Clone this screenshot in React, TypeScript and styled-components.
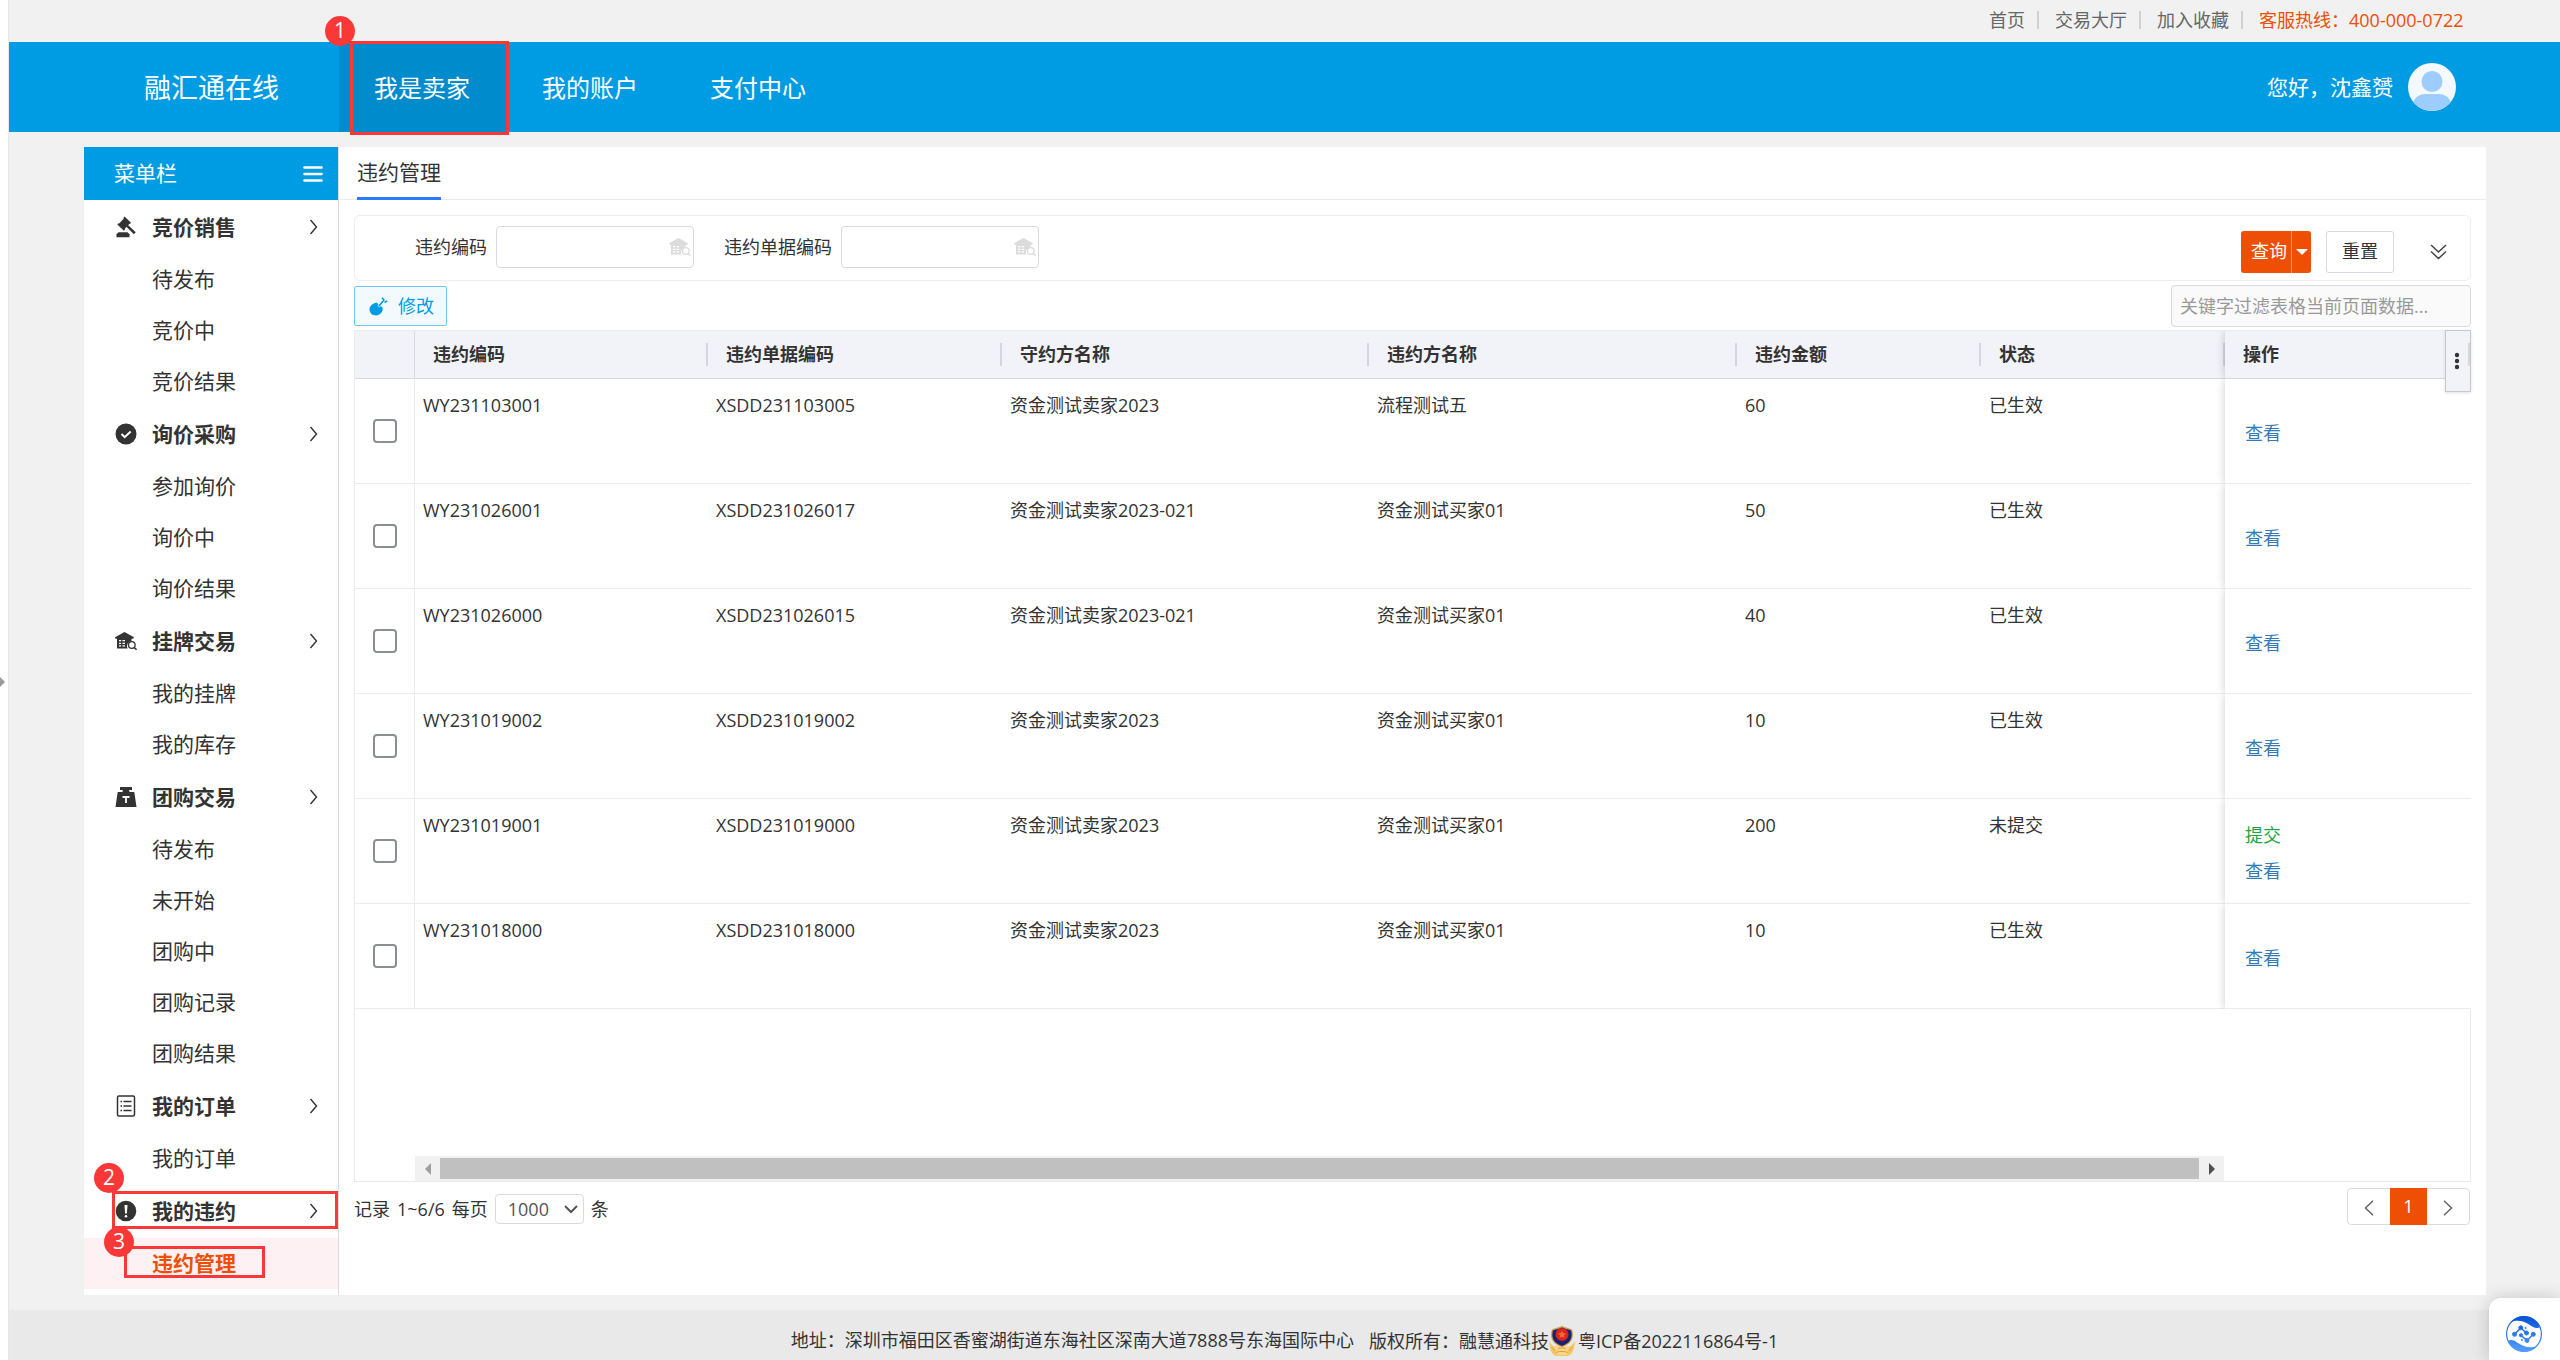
import React from 'react';
import styled, { createGlobalStyle, css } from 'styled-components';

const GlobalStyle = createGlobalStyle`
  *, *::before, *::after { box-sizing: border-box; }
  body {
    margin: 0;
    background: #fff;
    color: #333;
    font-family: "Open Sans", "Noto Sans CJK SC", sans-serif;
    font-size: 18px;
    line-height: 27px;
  }
  a { color: inherit; text-decoration: none; }
  button, input, select { font: inherit; color: inherit; margin: 0; }
  button { padding: 0; border: 0; background: none; cursor: pointer; }
  svg { display: block; flex: none; }
`;

/* ---------- shell ---------- */

const Shell = styled.div`
  display: flex;
  min-height: 100vh;
`;

const CollapseStrip = styled.button`
  display: flex;
  align-items: center;
  width: 9px;
  height: 100vh;
  flex: none;
  position: sticky;
  top: 0;
  padding-top: 4px;
  border-right: 1px solid #e6e6e6;
  background: #fff;
`;

const Page = styled.div`
  display: flex;
  flex-direction: column;
  flex: 1;
  min-width: 0;
  background: #f1f1f1;
`;

const TopBar = styled.nav`
  display: flex;
  justify-content: flex-end;
  align-items: center;
  height: 42px;
  padding: 0 89px 3px 0;
  color: #666;
`;

const TopLink = styled.a`
  line-height: 18px;
  &:not(:last-child) {
    margin-right: 16px;
    padding-right: 12px;
    border-right: 2px solid #d3d0d0;
  }
`;

const Hotline = styled(TopLink)`
  min-width: 212px;
  color: #ee4f04;
`;

const Header = styled.header`
  display: flex;
  align-items: center;
  height: 90px;
  padding: 0 104px 0 135px;
  background: #009ce3;
  color: #fff;
`;

const Brand = styled.a`
  width: 195px;
  font-size: 27px;
`;

const MainNav = styled.nav`
  display: flex;
  align-self: stretch;
  flex: 1;
  font-size: 24px;
`;

const NavItem = styled.a<{ $active?: boolean }>`
  display: flex;
  align-items: center;
  position: relative;
  padding: 0 37px 0 35px;
  background: ${p => (p.$active ? '#008ccc' : 'transparent')};
`;

const User = styled.div`
  display: flex;
  align-items: center;
  gap: 15px;
  font-size: 21px;
`;

/* ---------- guide marks laid over the page ---------- */

const Frame = styled.span<{ $inset: string }>`
  position: absolute;
  inset: ${p => p.$inset};
  border: 3px solid #fb3838;
  pointer-events: none;
`;

const StepDot = styled.span<{ $left: number; $top: number }>`
  position: absolute;
  left: ${p => p.$left}px;
  top: ${p => p.$top}px;
  z-index: 2;
  width: 30px;
  height: 30px;
  border-radius: 50%;
  background: #fb3838;
  color: #fff;
  font-size: 21px;
  font-weight: 400;
  line-height: 28px;
  text-align: center;
`;

/* ---------- side menu ---------- */

const Body = styled.div`
  display: flex;
  margin: 15px 74px 15px 75px;
  background: #fff;
`;

const Sidebar = styled.aside`
  width: 255px;
  flex: none;
  padding-bottom: 6px;
  border-right: 1px solid #dcdcde;
  font-size: 21px;
`;

const SidebarHead = styled.div`
  display: flex;
  justify-content: space-between;
  align-items: center;
  height: 53px;
  padding: 0 15px 0 30px;
  background: #009ce3;
  color: #fff;
`;

const IconButton = styled.button`
  display: flex;
  align-items: center;
  justify-content: center;
`;

const GroupTitle = styled.button`
  display: flex;
  align-items: center;
  gap: 15px;
  position: relative;
  width: 100%;
  height: 54px;
  padding: 0 20px 0 31px;
  font-weight: 700;
  text-align: left;
  > svg:nth-of-type(2) { margin-left: auto; }
`;

const MenuLink = styled.a<{ $active?: boolean }>`
  display: block;
  position: relative;
  height: 51px;
  padding-left: 68px;
  line-height: 51px;
  ${p => p.$active && css`
    background: #fdf1f3;
    color: #ee4f04;
    font-weight: 700;
  `}
`;

/* ---------- work area ---------- */

const Main = styled.main`
  display: flex;
  flex-direction: column;
  flex: 1;
  min-width: 0;
`;

const Tabs = styled.div`
  display: flex;
  height: 53px;
  padding: 0 18px;
  border-bottom: 1px solid #ebebeb;
`;

const Tab = styled.button`
  height: 53px;
  border-bottom: 3px solid #2b7bff;
  font-size: 21px;
`;

const Work = styled.div`
  display: flex;
  flex-direction: column;
  flex: 1;
  padding: 15px 15px 0;
`;

const SearchPanel = styled.form`
  display: flex;
  align-items: center;
  height: 66px;
  padding: 0 23px 0 60px;
  border: 1px solid #eee;
  border-radius: 6px;
`;

const Field = styled.label`
  display: flex;
  align-items: center;
  gap: 9px;
  margin: 0 30px 2px 0;
`;

const LookupBox = styled.span`
  display: flex;
  align-items: center;
  width: 198px;
  height: 42px;
  padding-right: 2px;
  border: 1px solid #d7dae3;
  border-radius: 4px;
  color: #dcdcdc;
  input {
    flex: 1;
    min-width: 0;
    height: 100%;
    padding: 0 9px;
    border: 0;
    outline: 0;
    background: none;
    color: #333;
  }
`;

const Actions = styled.div`
  display: flex;
  align-items: center;
  height: 42px;
  margin: 7px 0 0 auto;
`;

const SplitButton = styled.div`
  display: flex;
  height: 42px;
  margin-right: 15px;
  border-radius: 3px;
  overflow: hidden;
  background: #ee4f04;
  color: #fff;
`;

const QueryButton = styled.button`
  width: 50px;
  padding-left: 6px;
`;

const CaretButton = styled(IconButton)`
  width: 20px;
  border-left: 1px solid #f69a72;
`;

const ResetButton = styled.button`
  width: 68px;
  height: 42px;
  margin-right: 36px;
  border: 1px solid #d7dae3;
  border-radius: 3px;
`;

const Toolbar = styled.div`
  display: flex;
  justify-content: space-between;
  align-items: center;
  padding: 4px 0 3px;
`;

const EditButton = styled.button`
  display: flex;
  align-items: center;
  gap: 10px;
  height: 40px;
  padding: 0 12px 0 14px;
  border: 1px solid #72c6ee;
  border-radius: 2px;
  background: #f2fafe;
  color: #009ce3;
`;

const FilterInput = styled.input`
  width: 300px;
  height: 42px;
  padding: 0 8px;
  border: 1px solid #d7dae3;
  border-radius: 4px;
  background: #fafafa;
  &::placeholder { color: #999; opacity: 1; }
`;

const TableFrame = styled.div`
  display: flex;
  flex-direction: column;
  flex: 1;
  position: relative;
  border: 1px solid #ebebed;
`;

const Grid = styled.table`
  width: 100%;
  border-collapse: separate;
  border-spacing: 0;
  table-layout: fixed;
  overflow: hidden;
`;

const HeadCell = styled.th`
  height: 48px;
  padding: 0 18px;
  border-bottom: 1px solid #d6d9e0;
  background: linear-gradient(#d4d7de, #d4d7de) right center / 2px 23px no-repeat #f2f3f9;
  text-align: left;
  font-weight: 700;
`;

const HeadCheckCell = styled(HeadCell)`
  border-right: 1px solid #d6d9e0;
  background: #f2f3f9;
`;

const pinned = css`
  position: sticky;
  right: 0;
  box-shadow: 0 0 9px rgba(0, 0, 0, 0.2);
  clip-path: inset(0 0 0 -9px);
`;

const PinnedHead = styled(HeadCell)`
  ${pinned}
`;

const Cell = styled.td`
  height: 105px;
  padding: 13px 8px;
  border-bottom: 1px solid #ebebf0;
  vertical-align: top;
`;

const CheckCell = styled(Cell)`
  padding: 0;
  border-right: 1px solid #ebebed;
  vertical-align: middle;
`;

const PinnedCell = styled(Cell)`
  ${pinned}
  padding: 4px 20px 0;
  background: #fff;
  vertical-align: middle;
`;

const RowCheck = styled.input`
  display: block;
  appearance: none;
  width: 24px;
  height: 24px;
  margin: 0 auto;
  border: 2px solid #8a8f91;
  border-radius: 4px;
  background: #fff;
  &:checked { background: #009ce3; }
`;

const RowAction = styled.a<{ $green?: boolean }>`
  display: block;
  line-height: 36px;
  color: ${p => (p.$green ? '#22a544' : '#337ab7')};
`;

const ColumnMenu = styled(IconButton)`
  position: absolute;
  top: -1px;
  right: -1px;
  width: 26px;
  height: 62px;
  padding-right: 2px;
  border: 1px solid #c6c8cc;
  background: linear-gradient(#d4d7de, #d4d7de) right 12px / 2px 23px no-repeat #f2f3f9;
  box-shadow: 0 1px 3px rgba(0, 0, 0, 0.12);
`;

const ScrollTrack = styled.div`
  display: flex;
  align-items: center;
  height: 25px;
  margin: auto 246px 0 60px;
  background: #f1f1f1;
`;

const ScrollThumb = styled.div`
  flex: 1;
  height: 21px;
  background: #c0c0c0;
`;

const ScrollArrow = styled(IconButton)`
  width: 25px;
  height: 25px;
`;

const Pager = styled.div`
  display: flex;
  justify-content: space-between;
  align-items: flex-start;
  height: 113px;
  padding: 6px 1px 0 0;
`;

const PageSize = styled.div`
  display: flex;
  align-items: center;
  gap: 7px;
  padding-top: 6px;
`;

const SelectBox = styled.span`
  display: flex;
  align-items: center;
  position: relative;
  color: #555;
  select {
    width: 89px;
    height: 30px;
    padding: 0 12px;
    border: 1px solid #d7dae3;
    border-radius: 4px;
    background: #fff;
    appearance: none;
  }
  svg {
    position: absolute;
    right: 6px;
    pointer-events: none;
  }
`;

const Pages = styled.nav`
  display: flex;
  height: 37px;
  border: 1px solid #dcdcdc;
  border-radius: 4px;
`;

const PageStep = styled(IconButton)`
  width: 42px;
  padding-top: 2px;
  color: #666;
`;

const PageNumber = styled.button`
  width: 37px;
  margin: -1px 0;
  background: #ee4f04;
  color: #fff;
`;

/* ---------- footer ---------- */

const Footer = styled.footer`
  display: flex;
  justify-content: center;
  flex: 1;
  min-height: 50px;
  gap: 15px;
  padding-top: 15px;
  background: #e9e9e9;
  line-height: 30px;
`;

const Copyright = styled.span`
  display: flex;
  align-items: center;
  height: 32px;
  a { padding-left: 3px; }
`;

const ChatWidget = styled.button`
  display: flex;
  position: fixed;
  right: 0;
  bottom: 0;
  width: 71px;
  height: 62px;
  padding: 18px 0 0 17px;
  border-radius: 12px 0 0 0;
  background: #fff;
  box-shadow: 0 0 18px rgba(0, 0, 0, 0.18);
`;

/* ---------- icons ---------- */

const GavelIcon = () => (
  <svg width="22" height="22" viewBox="0 0 22 22" fill="currentColor">
    <path d="M9.500 .5l6.500 6.300-1 1.200-.6-.3-4.600 5 .3.7-1.200 1.300L2.300 8.500l1.200-1.300.7.3 4.600-5-.3-.7z" />
    <path d="M12.500 8.500l8.200 7.700-1.800 2.100-7.800-7.900z" />
    <path d="M3.500 16.300h9l2 1.900v3h-13v-3z" />
  </svg>
);

const CheckDiscIcon = () => (
  <svg width="22" height="22" viewBox="0 0 22 22">
    <circle cx="11" cy="11" r="10.500" fill="currentColor" />
    <path d="M6.500 11l3.200 3.200 6-5.700" fill="none" stroke="#fff" strokeWidth="2" />
  </svg>
);

const HouseSearchIcon = ({ size = 22 }: { size?: number }) => (
  <svg width={size} height={size} viewBox="0 0 22 22">
    <path d="M9.500 2L19 7.200l-.8 1.600h-1.700v2.400a5 5 0 00-4 7.300H2V8.800H.5L0 7.200z" fill="currentColor" />
    <path d="M4 10.700h2.200M7.500 10.700H10M4 13.300h2.200M7.500 13.300H10M4 15.900h2.200M7.500 15.900H10" stroke="#fff" strokeWidth="1.200" />
    <circle cx="16.800" cy="15" r="3.300" fill="none" stroke="currentColor" strokeWidth="1.300" />
    <path d="M19.200 17.500l2.400 2.200" stroke="currentColor" strokeWidth="1.600" />
  </svg>
);

const WeightIcon = () => (
  <svg width="22" height="22" viewBox="0 0 22 22">
    <path d="M5 1h12v3h-3l.6 2h4.700L21.500 21H.5L2.700 6h4.700L8 4H5z" fill="currentColor" />
    <path d="M7.500 11h7M11 11V17" stroke="#fff" strokeWidth="1.800" />
  </svg>
);

const ListIcon = () => (
  <svg width="22" height="22" viewBox="0 0 22 22" fill="none" stroke="currentColor">
    <rect x="2.500" y="1" width="17" height="20" rx="1.500" strokeWidth="1.500" />
    <path d="M5.500 6.500H7M8.500 6.500h8M5.500 11H7M8.500 11h8M5.500 15.500H7M8.500 15.500h8" strokeWidth="1.400" />
  </svg>
);

const AlertDiscIcon = () => (
  <svg width="22" height="22" viewBox="0 0 22 22">
    <circle cx="11" cy="11" r="10.300" fill="currentColor" />
    <path d="M9.500 5h3l-.6 8.500h-1.800z" fill="#fff" />
    <circle cx="11" cy="16.300" r="1.300" fill="#fff" />
  </svg>
);

const ChevronIcon = () => (
  <svg width="9" height="16" viewBox="0 0 9 16" fill="none" stroke="currentColor" strokeWidth="1.400">
    <path d="M1.500 1l6 7-6 7" />
  </svg>
);

const HamburgerIcon = () => (
  <svg width="20" height="16" viewBox="0 0 20 16" stroke="currentColor" strokeWidth="2.600" strokeLinecap="round">
    <path d="M1.500 1.500h17M1.500 8h17M1.500 14.500h17" />
  </svg>
);

const AvatarIcon = () => (
  <svg width="48" height="48" viewBox="0 0 48 48">
    <circle cx="24" cy="24" r="24" fill="#f3f9ff" />
    <circle cx="24" cy="18.500" r="10.500" fill="#9dcdff" />
    <path d="M5.500 39.200C7 34 12 31 17 31h14c5 0 10 3 11.500 8.200A24 24 0 015.500 39.200z" fill="#9dcdff" />
  </svg>
);

const EditIcon = () => (
  <svg width="19" height="19" viewBox="0 0 19 19">
    <path d="M7.500 5.500l6 5c1 4-2.500 8-6.500 8C3 18.500.5 15.500.5 12.500.5 9 3.500 6.500 7.500 5.500z" fill="currentColor" />
    <path d="M9.500 9.500l5-6" stroke="#f2fafe" strokeWidth="2.800" />
    <path d="M9.800 9.300l5.200-6.200M13 .8l2.200 2.400M15.500 5.500l2.700-1.600" stroke="currentColor" strokeWidth="1.600" fill="none" />
  </svg>
);

const Caret = ({ dir, color, size = 6 }: { dir: 'left' | 'right' | 'down'; color: string; size?: number }) => {
  const long = size * 2;
  const box = dir === 'down' ? [long, size] : [size, long];
  const d = {
    left: `M${size} 0v${long}L0 ${size}z`,
    right: `M0 0v${long}l${size}-${size}z`,
    down: `M0 0h${long}l-${size} ${size}z`,
  }[dir];
  return (
    <svg width={box[0]} height={box[1]} viewBox={`0 0 ${box[0]} ${box[1]}`} fill={color}>
      <path d={d} />
    </svg>
  );
};

const DoubleDownIcon = () => (
  <svg width="17" height="16" viewBox="0 0 17 16" fill="none" stroke="#444" strokeWidth="1.500">
    <path d="M1 1l7.500 7L16 1M1 7.500l7.500 7 7.500-7" />
  </svg>
);

const DotsIcon = () => (
  <svg width="6" height="18" viewBox="0 0 6 18" fill="#333">
    <circle cx="3" cy="3" r="2.200" /><circle cx="3" cy="9" r="2.200" /><circle cx="3" cy="15" r="2.200" />
  </svg>
);

const SelectArrow = () => (
  <svg width="14" height="9" viewBox="0 0 14 9" fill="none" stroke="currentColor" strokeWidth="2">
    <path d="M1 1l6 6 6-6" />
  </svg>
);

const StepIcon = ({ back }: { back?: boolean }) => (
  <svg width="10" height="16" viewBox="0 0 10 16" fill="none" stroke="currentColor" strokeWidth="1.500">
    <path d={back ? 'M9 .8L1.500 8 9 15.200' : 'M1 .8L8.500 8 1 15.200'} />
  </svg>
);

const PoliceBadgeIcon = () => (
  <svg width="26" height="30" viewBox="0 0 26 30">
    <path d="M.5 15C0 24 4 30 8 30h10c4 0 8-6 7.500-15-2 5-6 7.500-12.500 7.500S2.500 20 .5 15z" fill="#f4c765" />
    <path d="M5 20l3 9h10l3-9z" fill="#f8d588" />
    <path d="M13 0c3 2 7 1.500 10 3.500 2 6 1.500 14-10 17.500C1.500 17.500 1 9.500 3 3.500 6 1.500 10 2 13 0z" fill="#c89a4a" />
    <path d="M13 1.500c3 2 6.500 1.500 9 3 1.700 6 .5 12-9 15.500C3.500 16.500 2.300 10.500 4 4.500c2.500-1.500 6-1 9-3z" fill="#1b2370" />
    <circle cx="13" cy="8.500" r="6.500" fill="#d8261c" />
    <path d="M13 4.500l1.200 2.600 2.800.3-2 1.900.5 2.800-2.500-1.400-2.500 1.400.5-2.800-2-1.900 2.800-.3z" fill="#f5672c" />
    <path d="M9 23c2-1.500 6-1.500 8 0M7 26.500c3-1.500 9-1.500 12 0M2.500 21l4 4M23.500 21l-4 4" stroke="#dca040" fill="none" />
  </svg>
);

const ChatLogo = () => (
  <svg width="36" height="36" viewBox="0 0 36 36">
    <defs>
      <linearGradient id="chat-blue" x1="0" y1="0" x2="0" y2="36" gradientUnits="userSpaceOnUse">
        <stop offset="0" stopColor="#0553d8" />
        <stop offset="1" stopColor="#559dff" />
      </linearGradient>
    </defs>
    <g fill="url(#chat-blue)" stroke="url(#chat-blue)">
      <circle cx="18" cy="18" r="17.400" fill="none" strokeWidth="1.200" />
      <path stroke="none" d="M4.500 6A18 18 0 0134 10.500c-1 2-4.500 2-7 .5C21 7 15 2.500 4.500 6z" />
      <path stroke="none" d="M31.500 30A18 18 0 012 25.500c1-2 4.500-2 7-.5 6 4 12 8.500 22.500 5z" />
      <path d="M8.500 18.300l6.300-6.300M14.800 12l5.700 5M15 19.300l6 5.200 6.300-6.200" fill="none" strokeWidth="1.600" />
      <circle cx="8.500" cy="18.300" r="2" /><circle cx="14.800" cy="11.800" r="2" />
      <circle cx="20.500" cy="17" r="2" /><circle cx="15" cy="19.300" r="1.600" />
      <circle cx="21" cy="24.500" r="2" /><circle cx="27.300" cy="18.300" r="2" />
      <circle cx="19.600" cy="12" r=".6" /><circle cx="16" cy="24" r=".6" />
    </g>
  </svg>
);

/* ---------- data ---------- */

interface MenuGroup {
  title: string;
  icon: React.ReactNode;
  items: string[];
}

const MENU: MenuGroup[] = [
  { title: '竞价销售', icon: <GavelIcon />, items: ['待发布', '竞价中', '竞价结果'] },
  { title: '询价采购', icon: <CheckDiscIcon />, items: ['参加询价', '询价中', '询价结果'] },
  { title: '挂牌交易', icon: <HouseSearchIcon />, items: ['我的挂牌', '我的库存'] },
  { title: '团购交易', icon: <WeightIcon />, items: ['待发布', '未开始', '团购中', '团购记录', '团购结果'] },
  { title: '我的订单', icon: <ListIcon />, items: ['我的订单'] },
  { title: '我的违约', icon: <AlertDiscIcon />, items: ['违约管理'] },
];

const COLUMNS = [
  { title: '违约编码', width: 293 },
  { title: '违约单据编码', width: 294 },
  { title: '守约方名称', width: 367 },
  { title: '违约方名称', width: 368 },
  { title: '违约金额', width: 244 },
  { title: '状态', width: 244 },
];

const ROWS = [
  ['WY231103001', 'XSDD231103005', '资金测试卖家2023', '流程测试五', '60', '已生效'],
  ['WY231026001', 'XSDD231026017', '资金测试卖家2023-021', '资金测试买家01', '50', '已生效'],
  ['WY231026000', 'XSDD231026015', '资金测试卖家2023-021', '资金测试买家01', '40', '已生效'],
  ['WY231019002', 'XSDD231019002', '资金测试卖家2023', '资金测试买家01', '10', '已生效'],
  ['WY231019001', 'XSDD231019000', '资金测试卖家2023', '资金测试买家01', '200', '未提交'],
  ['WY231018000', 'XSDD231018000', '资金测试卖家2023', '资金测试买家01', '10', '已生效'],
];

const SideMenu = () => (
  <Sidebar>
    <SidebarHead>
      菜单栏
      <IconButton aria-label="收起菜单"><HamburgerIcon /></IconButton>
    </SidebarHead>
    {MENU.map(group => (
      <div key={group.title}>
        <GroupTitle>
          {group.icon}
          {group.title}
          <ChevronIcon />
          {group.title === '我的违约' && (
            <>
              <Frame $inset="7px 0 9px 28px" />
              <StepDot $left={10} $top={-21}>2</StepDot>
            </>
          )}
        </GroupTitle>
        {group.items.map(item => (
          <MenuLink key={item} href="#" $active={item === '违约管理'}>
            {item}
            {item === '违约管理' && (
              <>
                <Frame $inset="8px 73px 11px 40px" />
                <StepDot $left={20} $top={-11}>3</StepDot>
              </>
            )}
          </MenuLink>
        ))}
      </div>
    ))}
  </Sidebar>
);

const SearchForm = () => (
  <SearchPanel onSubmit={e => e.preventDefault()}>
    {['违约编码', '违约单据编码'].map(name => (
      <Field key={name}>
        {name}
        <LookupBox>
          <input type="text" />
          <HouseSearchIcon />
        </LookupBox>
      </Field>
    ))}
    <Actions>
      <SplitButton>
        <QueryButton type="submit">查询</QueryButton>
        <CaretButton type="button" aria-label="更多查询"><Caret dir="down" color="#fff" /></CaretButton>
      </SplitButton>
      <ResetButton type="reset">重置</ResetButton>
      <IconButton type="button" aria-label="展开条件"><DoubleDownIcon /></IconButton>
    </Actions>
  </SearchPanel>
);

const DataTable = () => (
  <TableFrame>
    <Grid>
      <colgroup>
        <col width={60} />
        {COLUMNS.map(c => <col key={c.title} width={c.width} />)}
        <col width={246} />
      </colgroup>
      <thead>
        <tr>
          <HeadCheckCell aria-label="选择" />
          {COLUMNS.map(c => <HeadCell key={c.title}>{c.title}</HeadCell>)}
          <PinnedHead>操作</PinnedHead>
        </tr>
      </thead>
      <tbody>
        {ROWS.map(row => (
          <tr key={row[0]}>
            <CheckCell><RowCheck type="checkbox" aria-label={row[0]} /></CheckCell>
            {row.map((value, i) => <Cell key={i}>{value}</Cell>)}
            <PinnedCell>
              {row[5] === '未提交' && <RowAction href="#" $green>提交</RowAction>}
              <RowAction href="#">查看</RowAction>
            </PinnedCell>
          </tr>
        ))}
      </tbody>
    </Grid>
    <ScrollTrack>
      <ScrollArrow aria-label="向左滚动"><Caret dir="left" color="#a0a0a0" /></ScrollArrow>
      <ScrollThumb />
      <ScrollArrow aria-label="向右滚动"><Caret dir="right" color="#505050" /></ScrollArrow>
    </ScrollTrack>
    <ColumnMenu aria-label="列设置"><DotsIcon /></ColumnMenu>
  </TableFrame>
);

export default function App() {
  return (
    <>
      <GlobalStyle />
      <Shell>
        <CollapseStrip aria-label="展开侧栏"><Caret dir="right" color="#999" size={5} /></CollapseStrip>
        <Page>
          <TopBar>
            <TopLink href="#">首页</TopLink>
            <TopLink href="#">交易大厅</TopLink>
            <TopLink href="#">加入收藏</TopLink>
            <Hotline href="#">客服热线：400-000-0722</Hotline>
          </TopBar>
          <Header>
            <Brand href="#">融汇通在线</Brand>
            <MainNav>
              <NavItem href="#" $active>
                我是卖家
                <Frame $inset="-1px -2px -3px 11px" />
                <StepDot $left={-14} $top={-26}>1</StepDot>
              </NavItem>
              <NavItem href="#">我的账户</NavItem>
              <NavItem href="#">支付中心</NavItem>
            </MainNav>
            <User>您好，沈鑫赟<AvatarIcon /></User>
          </Header>
          <Body>
            <SideMenu />
            <Main>
              <Tabs><Tab>违约管理</Tab></Tabs>
              <Work>
                <SearchForm />
                <Toolbar>
                  <EditButton><EditIcon />修改</EditButton>
                  <FilterInput aria-label="关键字过滤" placeholder="关键字过滤表格当前页面数据..." />
                </Toolbar>
                <DataTable />
                <Pager>
                  <PageSize>
                    <span>记录</span>
                    <span>1~6/6</span>
                    <label htmlFor="page-size">每页</label>
                    <SelectBox>
                      <select id="page-size" defaultValue="1000"><option>1000</option></select>
                      <SelectArrow />
                    </SelectBox>
                    <span>条</span>
                  </PageSize>
                  <Pages>
                    <PageStep aria-label="上一页"><StepIcon back /></PageStep>
                    <PageNumber>1</PageNumber>
                    <PageStep aria-label="下一页"><StepIcon /></PageStep>
                  </Pages>
                </Pager>
              </Work>
            </Main>
          </Body>
          <Footer>
            <span>地址：深圳市福田区香蜜湖街道东海社区深南大道7888号东海国际中心</span>
            <Copyright>版权所有：融慧通科技<PoliceBadgeIcon /><a href="#">粤ICP备2022116864号-1</a></Copyright>
          </Footer>
        </Page>
      </Shell>
      <ChatWidget aria-label="在线客服"><ChatLogo /></ChatWidget>
    </>
  );
}
